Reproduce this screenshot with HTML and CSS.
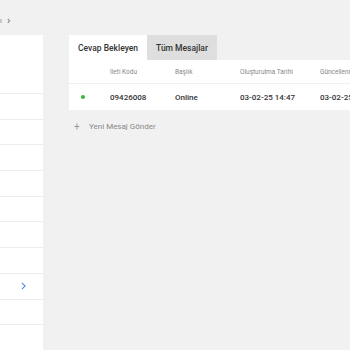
FILE: index.html
```html
<!DOCTYPE html>
<html lang="tr">
<head>
<meta charset="utf-8">
<link rel="stylesheet" href="styles.css">
</head>
<body>
<div class="breadcrumb"><span class="crumb">ı</span><span class="sep">›</span></div>
<div class="layout">
  <aside class="sidebar">
    <div class="side-head"></div>
    <div class="side-row"></div>
    <div class="side-row"></div>
    <div class="side-row"></div>
    <div class="side-row"></div>
    <div class="side-row"></div>
    <div class="side-row"></div>
    <div class="side-row"></div>
    <div class="side-row active"><svg class="chev" viewBox="0 0 6 10" width="5" height="8"><path d="M1 1l4 4-4 4" fill="none" stroke="#4a90e2" stroke-width="1.4"/></svg></div>
    <div class="side-row"></div>
    <div class="side-row"></div>
  </aside>
  <main class="content">
    <div class="tabs">
      <div class="tab tab-active">Cevap Bekleyen</div>
      <div class="tab">Tüm Mesajlar</div>
    </div>
    <div class="table">
      <div class="row head">
        <div class="c dot-col"></div>
        <div class="c code">İleti Kodu</div>
        <div class="c title">Başlık</div>
        <div class="c created">Oluşturulma Tarihi</div>
        <div class="c updated">Güncellenme Tarihi</div>
      </div>
      <div class="row data">
        <div class="c dot-col"><span class="dot"></span></div>
        <div class="c code">09426008</div>
        <div class="c title">Online</div>
        <div class="c created">03-02-25 14:47</div>
        <div class="c updated">03-02-25 14:47</div>
      </div>
    </div>
    <div class="new-msg"><span class="plus">+</span>Yeni Mesaj Gönder</div>
  </main>
</div>
</body>
</html>
```
FILE: styles.css
```css
* { box-sizing: border-box; }
html, body { margin: 0; padding: 0; }
body {
  background: #f1f1f1;
  font-family: Roboto, "Noto Sans", sans-serif;
  color: #333;
  width: 350px;
  height: 350px;
  overflow: hidden;
}
.breadcrumb {
  height: 35px;
  display: flex;
  align-items: center;
  gap: 5px;
  font-size: 8px;
  color: #888;
  padding-top: 5px;
}
.breadcrumb .sep { font-size: 11px; color: #666; }
.layout {
  display: flex;
  align-items: flex-start;
}
.sidebar {
  width: 43px;
  background: #fff;
  height: 330px;
  flex: none;
}
.side-head { height: 59px; border-bottom: 1px solid #ececec; }
.side-row {
  height: 25.7px;
  border-bottom: 1px solid #ececec;
  display: flex;
  align-items: center;
  justify-content: flex-end;
  padding-right: 17px;
}
.content {
  margin-left: 26px;
  flex: 1;
  min-width: 0;
}
.tabs { display: flex; height: 25px; }
.tab {
  display: flex;
  align-items: center;
  justify-content: center;
  font-size: 8.5px;
  font-weight: 500;
  color: #333;
  background: #dedede;
  width: 70px;
}
.tab-active { background: #fff; width: 78px; }
.table { background: #fff; width: 281px; overflow: hidden; }
.row { display: flex; align-items: center; }
.row.head { height: 24px; font-size: 6.5px; color: #888; border-bottom: 1px solid #f0f0f0; }
.row.data { height: 26px; font-size: 8px; font-weight: 500; color: #333; }
.c { white-space: nowrap; overflow: hidden; flex: none; }
.dot-col { width: 41px; padding-left: 12px; display: flex; align-items: center; }
.dot { width: 4px; height: 4px; border-radius: 50%; background: #2dbb3a; display: block; }
.code { width: 65px; }
.title { width: 65px; }
.created { width: 80px; }
.updated { width: 30px; }
.new-msg {
  margin-top: 11px;
  font-size: 8px;
  color: #888;
  display: flex;
  align-items: center;
}
.plus { width: 20px; padding-left: 5px; font-size: 10px; color: #999; }
```
